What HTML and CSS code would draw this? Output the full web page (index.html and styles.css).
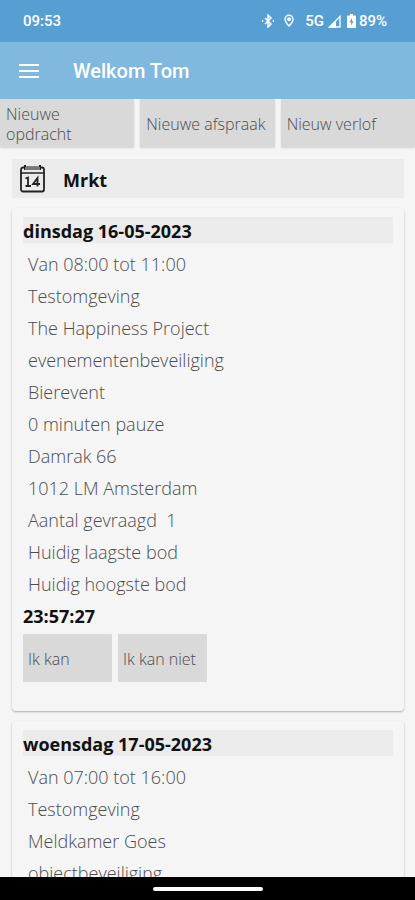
FILE: index.html
```html
<!DOCTYPE html>
<html lang="nl">
<head>
<meta charset="utf-8">
<meta name="viewport" content="width=device-width, initial-scale=1">
<title>Welkom Tom</title>
<link rel="stylesheet" href="styles.css">
</head>
<body>
<div class="status">
  <span class="clock">09:53</span>
  <div class="status-icons">
    <svg class="bluetooth" width="12" height="14" viewBox="0 0 12 14" fill="none" stroke="#fff" stroke-width="1.5"><path d="M3 4l6 6-3 3V1l3 3-6 6"/><path d="M.5 6v2M11.500 6v2"/></svg>
    <svg class="pin" width="10" height="14" viewBox="0 0 10 14" fill="none" stroke="#fff" stroke-width="1.4"><path d="M5 12C2.400 9.200 1 7.200 1 5.200a4 4 0 0 1 8 0c0 2-1.400 4-4 6.800z"/><circle cx="5" cy="5.200" r="1.300" fill="#fff"/></svg>
    <span>5G</span>
    <svg class="signal" width="13" height="13" viewBox="0 0 13 13"><path d="M1.500 12L12 1.500V12z" fill="none" stroke="#fff" stroke-width="1.300"/><path d="M1 12.500L8 5.500v7z" fill="#fff"/></svg>
    <svg class="battery" width="9" height="14" viewBox="0 0 9 14"><path d="M3 0h3v1.500h2a1 1 0 0 1 1 1V13a1 1 0 0 1-1 1H1a1 1 0 0 1-1-1V2.500a1 1 0 0 1 1-1h2z" fill="#fff"/><path d="M5 4L2.500 8.300h1.600V11.500L6.600 7.200H5z" fill="#579fd2"/></svg>
    <span>89%</span>
  </div>
</div>
<header class="appbar">
  <button class="menu" type="button" aria-label="Menu">
    <svg width="20" height="16" viewBox="0 0 20 16" stroke="#fff" stroke-width="2"><path d="M0 2h20M0 8h20M0 14h20"/></svg>
  </button>
  <h1>Welkom Tom</h1>
</header>
<nav class="actions">
  <button class="btn" type="button">Nieuwe opdracht</button>
  <button class="btn" type="button">Nieuwe afspraak</button>
  <button class="btn" type="button">Nieuw verlof</button>
</nav>
<main>
  <div class="section">
    <svg width="25" height="29" viewBox="0 0 25 29" fill="none" stroke="#222"><rect x="1" y="3.500" width="23" height="24" rx="2" stroke-width="1.800"/><path d="M1 9h23" stroke-width="1.500"/><path d="M5 1v5M20 1v5" stroke-width="2"/><path d="M5 4.500h15" stroke="#777" stroke-width="3"/><path d="M5.500 14.500L8 13.500v9M5.500 22h5.500" stroke-width="1.800"/><path d="M17.500 22.500v-8.500l-4.500 6h7" stroke-width="1.800"/></svg>
    <h2>Mrkt</h2>
  </div>
  <article class="card">
    <h3>dinsdag 16-05-2023</h3>
    <ul>
      <li>Van 08:00 tot 11:00</li>
      <li>Testomgeving</li>
      <li>The Happiness Project</li>
      <li>evenementenbeveiliging</li>
      <li>Bierevent</li>
      <li>0 minuten pauze</li>
      <li>Damrak 66</li>
      <li>1012 LM Amsterdam</li>
      <li>Aantal gevraagd &nbsp;1</li>
      <li>Huidig laagste bod</li>
      <li>Huidig hoogste bod</li>
    </ul>
    <p class="timer">23:57:27</p>
    <div class="replies">
      <button class="btn" type="button">Ik kan</button>
      <button class="btn" type="button">Ik kan niet</button>
    </div>
  </article>
  <article class="card">
    <h3>woensdag 17-05-2023</h3>
    <ul>
      <li>Van 07:00 tot 16:00</li>
      <li>Testomgeving</li>
      <li>Meldkamer Goes</li>
      <li>objectbeveiliging</li>
    </ul>
  </article>
</main>
<footer class="gesture"><span></span></footer>
</body>
</html>
```
FILE: styles.css
```css
* { box-sizing: border-box; }
body {
  margin: 0;
  height: 100vh;
  display: flex;
  flex-direction: column;
  overflow: hidden;
  background: #f5f5f5;
  color: #4c4c4c;
  font-family: "Open Sans", "Noto Sans", sans-serif;
  font-size: 18px;
  font-weight: 300;
}
h1, h2, h3, p, ul { margin: 0; padding: 0; }
ul { list-style: none; }
button { border: 0; font: inherit; color: inherit; }

.status {
  flex: none;
  height: 42px;
  padding: 0 28px 0 23px;
  display: flex;
  align-items: center;
  justify-content: space-between;
  background: #579fd2;
  color: #fff;
  font-family: Roboto, sans-serif;
  font-size: 15px;
  font-weight: 500;
}
.status-icons { display: flex; align-items: center; }
.pin { margin: 0 11px 0 10px; }
.signal { margin: 0 6px 0 4px; }
.battery { margin-right: 3px; }

.appbar {
  flex: none;
  height: 57px;
  padding-left: 19px;
  display: flex;
  align-items: center;
  gap: 34px;
  background: #80b8de;
  color: #fff;
}
.menu { padding: 0; background: none; display: flex; }
.appbar h1 { font: 500 20px Roboto, sans-serif; }

.actions {
  flex: none;
  display: grid;
  grid-template-columns: 1fr 1fr 1fr;
  gap: 6px;
}
.btn {
  height: 48px;
  padding: 2px 5px 0;
  background: #d9d9d9;
  border-radius: 1px;
  font-size: 16px;
  line-height: 20px;
  text-align: left;
}
.actions .btn {
  padding-left: 6px;
  box-shadow: 0 1px 2px rgba(0, 0, 0, .15);
}

main {
  flex: 1;
  min-height: 0;
  overflow: hidden;
  padding: 12px 11px 0 12px;
}
.section {
  height: 39px;
  padding-left: 8px;
  display: flex;
  align-items: center;
  gap: 18px;
  background: #ebebeb;
}
.section h2 {
  padding-top: 2px;
  color: #111;
  font-size: 18px;
  font-weight: 700;
}

.card {
  margin-top: 10px;
  padding: 9px 11px 29px;
  border-radius: 4px;
  box-shadow: 0 1px 2px rgba(0, 0, 0, .3);
}
.card h3, .timer {
  color: #111;
  font-size: 18px;
  font-weight: 700;
}
.card h3 {
  margin-bottom: 5px;
  padding-top: 2px;
  background: #ebebeb;
  line-height: 24px;
}
.card li { padding-left: 5px; line-height: 32px; }
.timer { line-height: 32px; }
.replies { display: flex; gap: 6px; padding-top: 2px; }
.replies .btn { width: 89px; }

.gesture {
  flex: none;
  height: 23px;
  display: flex;
  align-items: center;
  justify-content: center;
  background: #000;
}
.gesture span { width: 110px; height: 4px; border-radius: 2px; background: #fff; }
```
